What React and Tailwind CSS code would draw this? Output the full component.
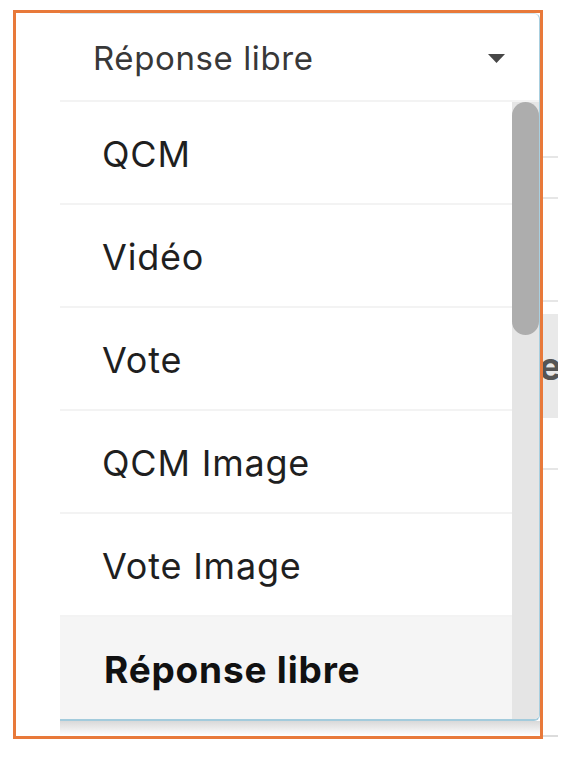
import React from "react";

const items = ["QCM", "Vidéo", "Vote", "QCM Image", "Vote Image", "Réponse libre"];

export default function App() {
  return (
    <div className="w-[574px] h-[768px] bg-white flex pl-[13px] font-['Inter',sans-serif] overflow-hidden">
      <div className="mt-[10px] w-[530px] h-[729px] border-[3px] border-[#e8793a] flex flex-col pl-[44px] bg-white">
        <div className="h-[708px] flex flex-col bg-white border-t border-t-[#d3e6ee] border-r border-r-[#a9cfdf] border-b-2 border-b-[#a3cbdc] rounded-tr-[6px] rounded-br-[6px] overflow-hidden">
          <div className="h-[86px] shrink-0 flex items-center justify-between pl-[33px] pr-[34px]">
            <span className="text-[33px] text-[#383838] leading-none tracking-[0.6px] mt-[3px]">Réponse libre</span>
            <svg width="17" height="9" viewBox="0 0 17 9" className="mt-[2px]">
              <path d="M0 0 H17 L8.5 9 Z" fill="#474747" />
            </svg>
          </div>
          <div className="h-[2px] shrink-0 bg-[#f3f3f3]" />
          <div className="flex-1 flex overflow-hidden">
            <div className="flex-1 flex flex-col">
              {items.map((it, i) => {
                const last = i === items.length - 1;
                return (
                  <div
                    key={it}
                    className={
                      last
                        ? "h-[103px] shrink-0 flex items-center pl-[44px] bg-[#f5f5f5]"
                        : "h-[103px] shrink-0 flex items-center pl-[42px] border-b-2 border-[#f3f3f3]"
                    }
                  >
                    <span
                      className={
                        last
                          ? "text-[37px] font-bold text-[#111111] leading-none tracking-[0.8px] mt-[2px]"
                          : "text-[36px] text-[#1f1f1f] leading-none tracking-[0.8px] mt-[3px]"
                      }
                    >
                      {it}
                    </span>
                  </div>
                );
              })}
            </div>
            <div className="w-[27px] shrink-0 bg-[#e5e5e5] flex flex-col">
              <div className="h-[233px] rounded-full bg-[#adadad]" />
            </div>
          </div>
        </div>
        <div className="h-[15px] shrink-0 bg-gradient-to-b from-[#d9d9d9] to-white" />
      </div>
      <div className="w-[15px] shrink-0 flex flex-col">
        <div className="mt-[156px] h-[2px] bg-[#e6e6e6]" />
        <div className="mt-[39px] h-[2px] bg-[#e6e6e6]" />
        <div className="mt-[101px] h-[2px] bg-[#e6e6e6]" />
        <div className="mt-[12px] h-[104px] bg-[#e9e9e9] flex items-center overflow-hidden">
          <span className="text-[38px] font-bold text-[#555555] leading-none -ml-[4px]">e</span>
        </div>
        <div className="mt-[50px] h-[2px] bg-[#e6e6e6]" />
        <div className="mt-[265px] h-[2px] bg-[#dcdcdc]" />
      </div>
    </div>
  );
}
